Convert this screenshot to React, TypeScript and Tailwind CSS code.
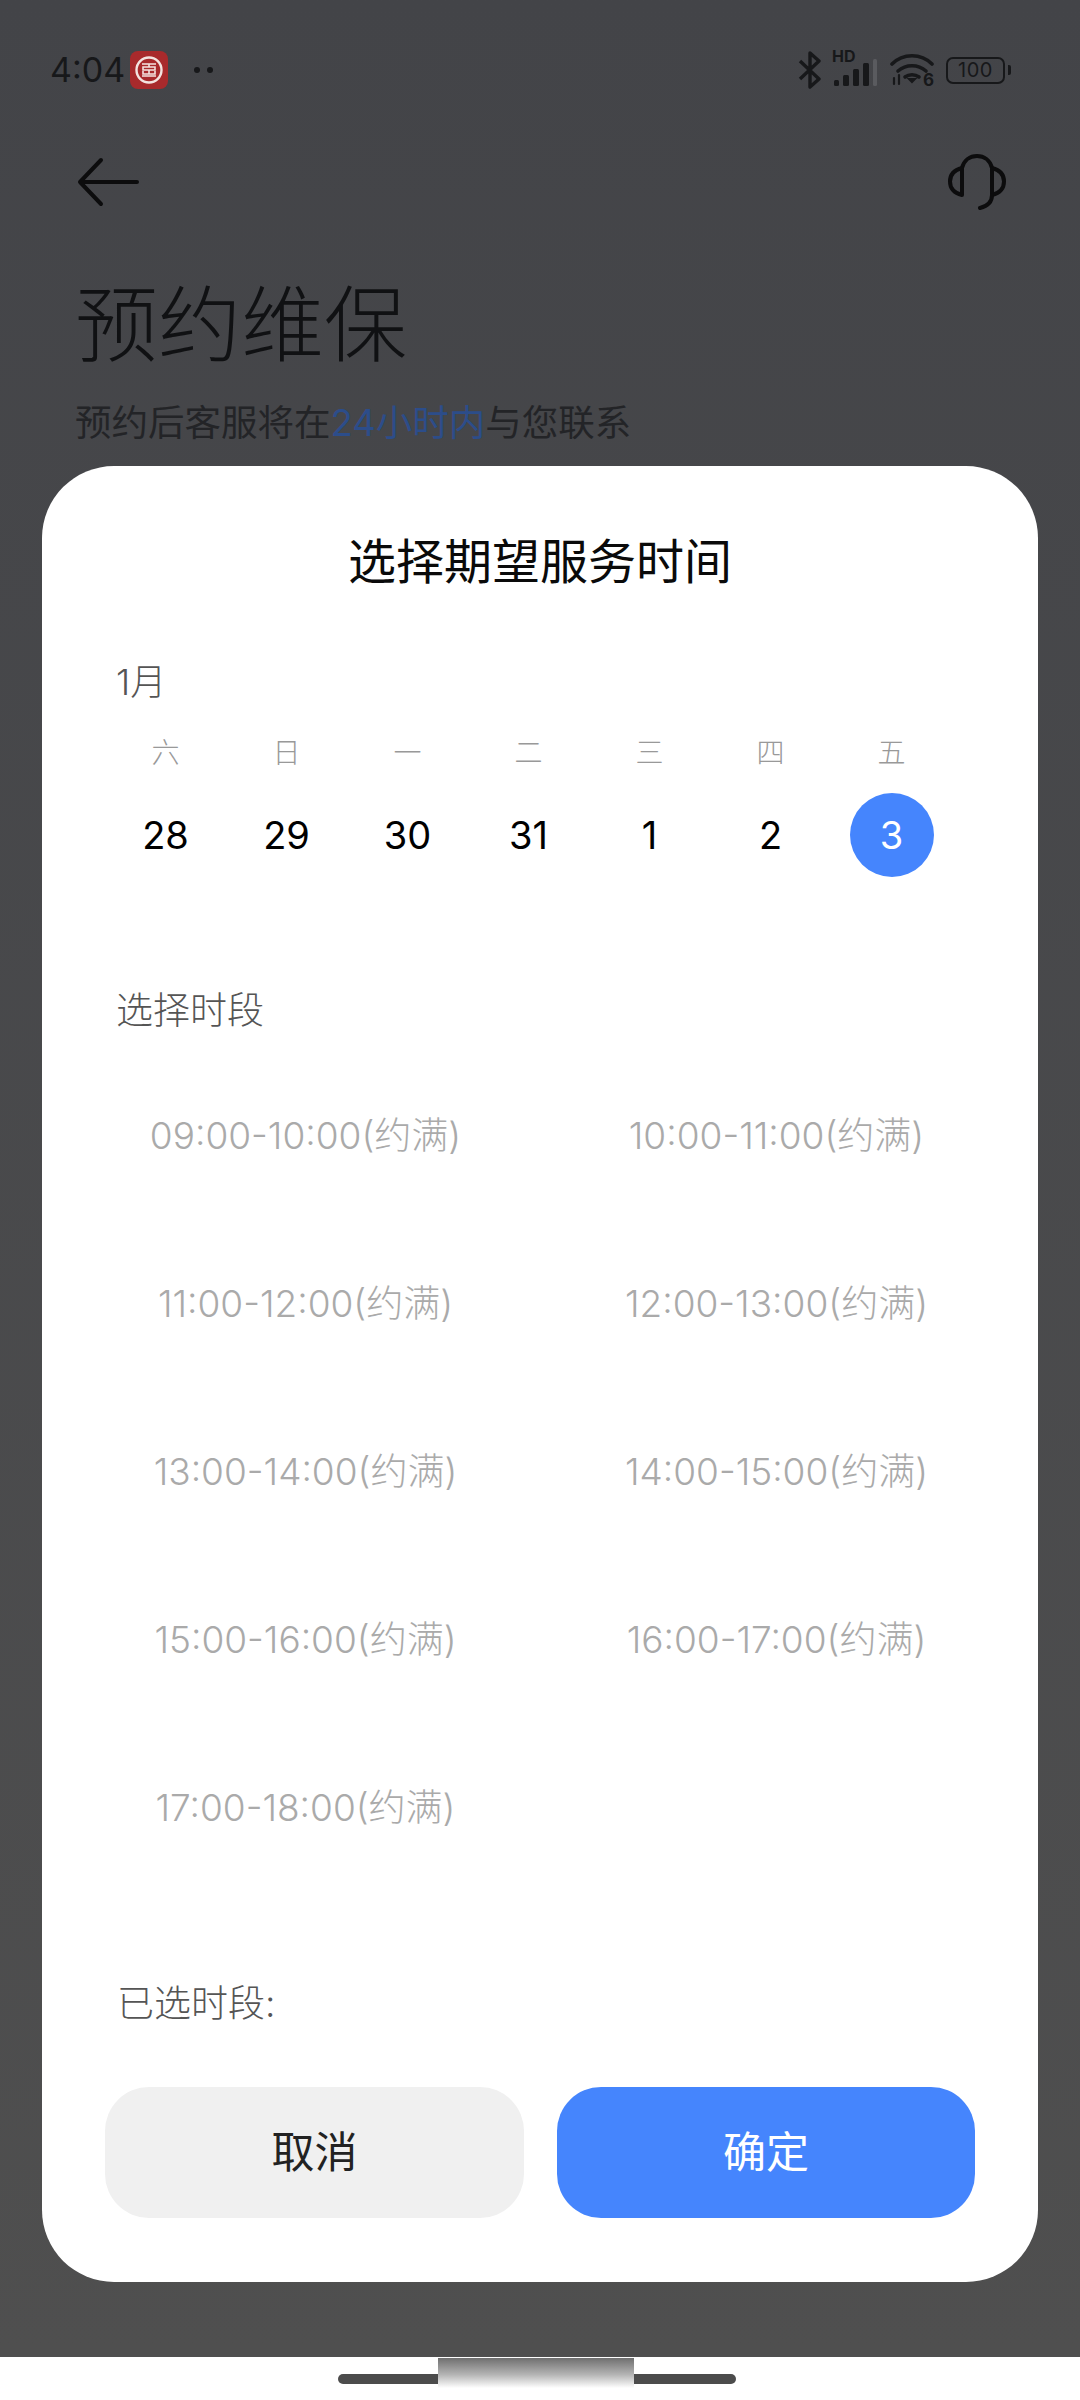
const cjk = "font-['Inter','Noto_Sans_CJK_SC',sans-serif]";

const weekdays = ["六", "日", "一", "二", "三", "四", "五"];
const dates = ["28", "29", "30", "31", "1", "2", "3"];
const slots = [
  "09:00-10:00(约满)",
  "10:00-11:00(约满)",
  "11:00-12:00(约满)",
  "12:00-13:00(约满)",
  "13:00-14:00(约满)",
  "14:00-15:00(约满)",
  "15:00-16:00(约满)",
  "16:00-17:00(约满)",
  "17:00-18:00(约满)",
];

function BankBadge() {
  return (
    <svg width="38" height="38" viewBox="0 0 38 38" className="block">
      <rect width="38" height="38" rx="8" fill="#a82a2c" />
      <circle cx="19" cy="19" r="12.500" fill="none" stroke="#f3e3e0" strokeWidth="2.400" />
      <path d="M12 13h14M19 13v3M13 16h12v3H13zM19 19v4M13 20v3h12v-3M12 25h14" fill="none" stroke="#f3e3e0" strokeWidth="1.600" />
    </svg>
  );
}

function Bluetooth() {
  return (
    <svg width="26" height="38" viewBox="0 0 26 38" fill="none" stroke="#17181a" strokeWidth="3.400" className="block">
      <path d="M3 10l19 18-9 8V2l9 8L3 28" strokeLinejoin="round" />
    </svg>
  );
}

function Signal() {
  return (
    <div className="relative h-[38px] w-[46px]">
      <span className="absolute left-0 top-[-3px] text-[16px] font-bold leading-[16px] text-[#17181a]">HD</span>
      <svg width="46" height="30" viewBox="0 0 46 30" className="absolute bottom-0 left-0 block">
        <rect x="2" y="21" width="5" height="6" rx="1.500" fill="#17181a" />
        <rect x="11" y="16" width="6" height="11" rx="1.500" fill="#17181a" />
        <rect x="21" y="10" width="6" height="17" rx="1.500" fill="#17181a" />
        <rect x="31" y="4" width="6" height="23" rx="1.500" fill="#17181a" />
        <rect x="41" y="0" width="4" height="27" rx="1.500" fill="#5a5b5f" />
      </svg>
    </div>
  );
}

function Wifi() {
  return (
    <div className="relative h-[38px] w-[44px]">
      <svg width="44" height="36" viewBox="0 0 44 36" fill="none" stroke="#17181a" strokeWidth="3.600" strokeLinecap="round" className="block">
        <path d="M2 13C13 2 31 2 42 13" />
        <path d="M8 20c8-7 20-7 28 0" />
        <path d="M15 26c4-3 10-3 14 0" />
        <path d="M22 31l3-3h-6z" fill="#17181a" strokeWidth="2" />
        <path d="M4 27v6M9 24v9" strokeWidth="2.200" />
      </svg>
      <span className="absolute bottom-[1px] right-[0px] text-[17px] font-bold leading-[15px] text-[#17181a]">6</span>
    </div>
  );
}

function Battery() {
  return (
    <div className="flex items-center gap-[3px]">
      <div className="flex h-[27px] w-[59px] items-center justify-center rounded-[7px] border-[2.500px] border-[#17181a] text-[20px] leading-none tracking-[0.5px] text-[#17181a]">
        100
      </div>
      <span className="h-[10px] w-[3px] rounded-r-[2px] bg-[#17181a]" />
    </div>
  );
}

function Headset() {
  return (
    <svg width="58" height="56" viewBox="0 0 58 56" fill="none" stroke="#0c0c0d" strokeWidth="4" strokeLinecap="round" strokeLinejoin="round" className="block">
      <path d="M14 14C16 6 22 2 29 2s13 4 15 12" />
      <path d="M14 14v27C6 39 2 34 2 27.500S6 16 14 14z" />
      <path d="M44 14v27c8-2 12-7 12-13.500S52 16 44 14z" />
      <path d="M44 41c0 6-4 11-12 13" />
    </svg>
  );
}

export default function App() {
  return (
    <div className={`relative flex h-[2400px] w-[1080px] flex-col bg-white ${cjk}`}>
      {/* dimmed page behind the sheet */}
      <div className="h-[2357px] bg-linear-to-b from-[#434448] to-[#4f4f4f]">
        <div className="flex h-[89px] items-end justify-between pl-[50px] pr-[69px]">
          <div className="flex items-center">
            <span className="text-[34px] leading-[38px] text-[#17181a]">4:04</span>
            <div className="ml-[5px]">
              <BankBadge />
            </div>
            <div className="ml-[26px] flex gap-[7px]">
              <span className="h-[6px] w-[6px] rounded-full bg-[#17181a]" />
              <span className="h-[6px] w-[6px] rounded-full bg-[#17181a]" />
            </div>
          </div>
          <div className="flex items-center gap-[9px]">
            <Bluetooth />
            <Signal />
            <div className="ml-[3px]">
              <Wifi />
            </div>
            <div className="ml-[3px]">
              <Battery />
            </div>
          </div>
        </div>

        <div className="mt-[65px] flex items-center justify-between pl-[77px] pr-[74px]">
          <svg width="62" height="50" viewBox="0 0 62 50" fill="none" stroke="#0c0c0d" strokeWidth="4" strokeLinecap="round" strokeLinejoin="round" className="block">
            <path d="M60 25H3M24 3L3 25l21 22" />
          </svg>
          <Headset />
        </div>

        <h1 className="ml-[75px] mt-[67px] text-[83px] font-extralight leading-[96px] text-[#101113]">预约维保</h1>
        <p className="ml-[75px] mt-[25px] text-[36.500px] font-normal leading-[50px] text-[#232427]">
          预约后客服将在<span className="text-[#2c4d8a]">24小时内</span>与您联系
        </p>
      </div>

      {/* home indicator strip */}
      <div className="flex flex-1 justify-center pr-[6px] pt-[17px]">
        <div className="h-[10px] w-[398px] rounded-full bg-[#4c4c4c]" />
      </div>
      <div className="absolute left-[438px] top-[2358px] h-[30px] w-[196px] bg-[linear-gradient(180deg,#6f6f6f,#b4b4b4_55%,#ffffff)]" />

      {/* sheet */}
      <div className="absolute left-[42px] top-[466px] flex h-[1816px] w-[996px] flex-col rounded-[72px] bg-white pt-[66px]">
        <h2 className="h-[60px] text-center text-[48px] font-normal leading-[60px] text-[#0a0a0a]">选择期望服务时间</h2>

        <div className="ml-[74px] mt-[65px] h-[50px] text-[36px] font-light leading-[50px] text-[#555555]">1月</div>

        <div className="ml-[63px] mt-[26px] grid w-[847px] grid-cols-7">
          {weekdays.map((w) => (
            <div key={w} className="h-[40px] text-center text-[28px] font-light leading-[40px] text-[#999999]">
              {w}
            </div>
          ))}
        </div>

        <div className="ml-[63px] mt-[20px] grid w-[847px] grid-cols-7">
          {dates.map((d) => (
            <div key={d} className="flex h-[84px] items-center justify-center">
              {d === "3" ? (
                <div className="flex h-[84px] w-[84px] items-center justify-center rounded-full bg-[#4585fd] text-[38px] text-white">
                  {d}
                </div>
              ) : (
                <span className="text-[38px] text-black">{d}</span>
              )}
            </div>
          ))}
        </div>

        <div className="ml-[74px] mt-[109px] h-[50px] text-[37px] font-light leading-[50px] text-[#555555]">选择时段</div>

        <div className="ml-[28px] mt-[16px] grid w-[942px] grid-cols-2">
          {slots.map((s) => (
            <div key={s} className="flex h-[168px] items-center justify-center text-[37px] font-light text-[#aaaaaa]">
              {s}
            </div>
          ))}
          <div className="h-[168px]" />
        </div>

        <div className="ml-[75px] mt-[87px] h-[50px] text-[37px] font-light leading-[50px] text-[#555555]">已选时段:</div>

        <div className="ml-[63px] mt-[58px] flex gap-[33px]">
          <button className="h-[131px] w-[419px] rounded-[44px] bg-[#f0f0f0] text-[43px] text-[#222222]">取消</button>
          <button className="h-[131px] w-[418px] rounded-[44px] bg-[#4585fd] text-[43px] text-white">确定</button>
        </div>
      </div>
    </div>
  );
}
